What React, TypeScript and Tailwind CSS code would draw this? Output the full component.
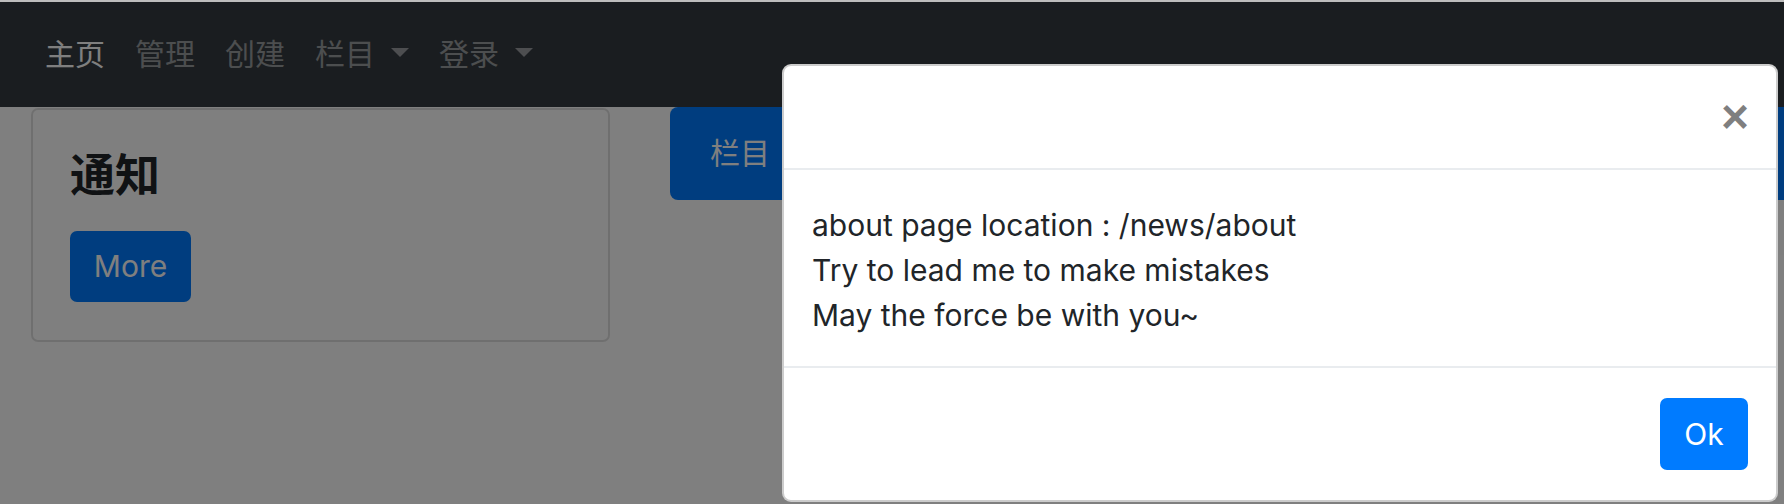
const sans = "font-['Inter','Noto_Sans_CJK_SC',sans-serif]";

type NavItem = { label: string; active?: boolean; dropdown?: boolean };

const navItems: NavItem[] = [
  { label: "主页", active: true },
  { label: "管理" },
  { label: "创建" },
  { label: "栏目", dropdown: true },
  { label: "登录", dropdown: true },
];

function Caret() {
  return (
    <span className="ml-[16px] mt-[-4px] inline-block h-0 w-0 border-x-[9px] border-t-[9px] border-x-transparent border-t-current" />
  );
}

function Navbar() {
  return (
    <nav className="flex h-[105px] items-center bg-[#343a40] px-[30px]">
      {navItems.map((item) => (
        <a
          key={item.label}
          className={
            "flex items-center px-[15px] text-[30px] leading-[45px] " +
            (item.active ? "text-white" : "text-white/50")
          }
        >
          {item.label}
          {item.dropdown && <Caret />}
        </a>
      ))}
    </nav>
  );
}

function NoticeCard() {
  return (
    <div className="mt-[1px] h-[234px] w-[579px] rounded-[7px] border-2 border-black/[.125] px-[37px] pt-[39px]">
      <h4 className="mb-[28px] h-[54px] text-[45px] leading-[54px] font-bold text-[#212529]">
        通知
      </h4>
      <button className="flex h-[71px] w-[121px] items-center justify-center rounded-[7px] bg-[#007bff] text-[30px] text-white">
        More
      </button>
    </div>
  );
}

function Modal() {
  return (
    <div className="absolute left-[782px] top-[64px] flex w-[996px] flex-col rounded-[9px] border-2 border-black/20 bg-white">
      <div className="flex h-[104px] items-center justify-end border-b-2 border-[#e9ecef] pr-[27px]">
        <span className="font-['Liberation_Sans',sans-serif] text-[48px] leading-none font-bold text-black/50">
          ×
        </span>
      </div>
      <div className="px-[28px] pb-[28px] pt-[33px] text-[30px] leading-[45px] text-[#212529]">
        <div>about page location : /news/about</div>
        <div>Try to lead me to make mistakes</div>
        <div>May the force be with you~</div>
      </div>
      <div className="flex justify-end border-t-2 border-[#e9ecef] pb-[30px] pr-[28px] pt-[30px]">
        <button className="flex h-[72px] w-[88px] items-center justify-center rounded-[7px] bg-[#007bff] text-[30px] text-white">
          Ok
        </button>
      </div>
    </div>
  );
}

export default function App() {
  return (
    <div className={"relative h-[504px] w-[1784px] overflow-hidden bg-white " + sans}>
      <div className="h-[2px] bg-[#bdbdbd]" />
      <Navbar />
      <div className="flex items-start pl-[31px]">
        <NoticeCard />
        <div className="ml-[60px] flex h-[93px] flex-1 items-center rounded-l-[8px] bg-[#007bff] pl-[40px] text-[30px] text-white">
          栏目
        </div>
      </div>
      <div className="absolute inset-x-0 bottom-0 top-[2px] bg-black/50" />
      <Modal />
    </div>
  );
}
